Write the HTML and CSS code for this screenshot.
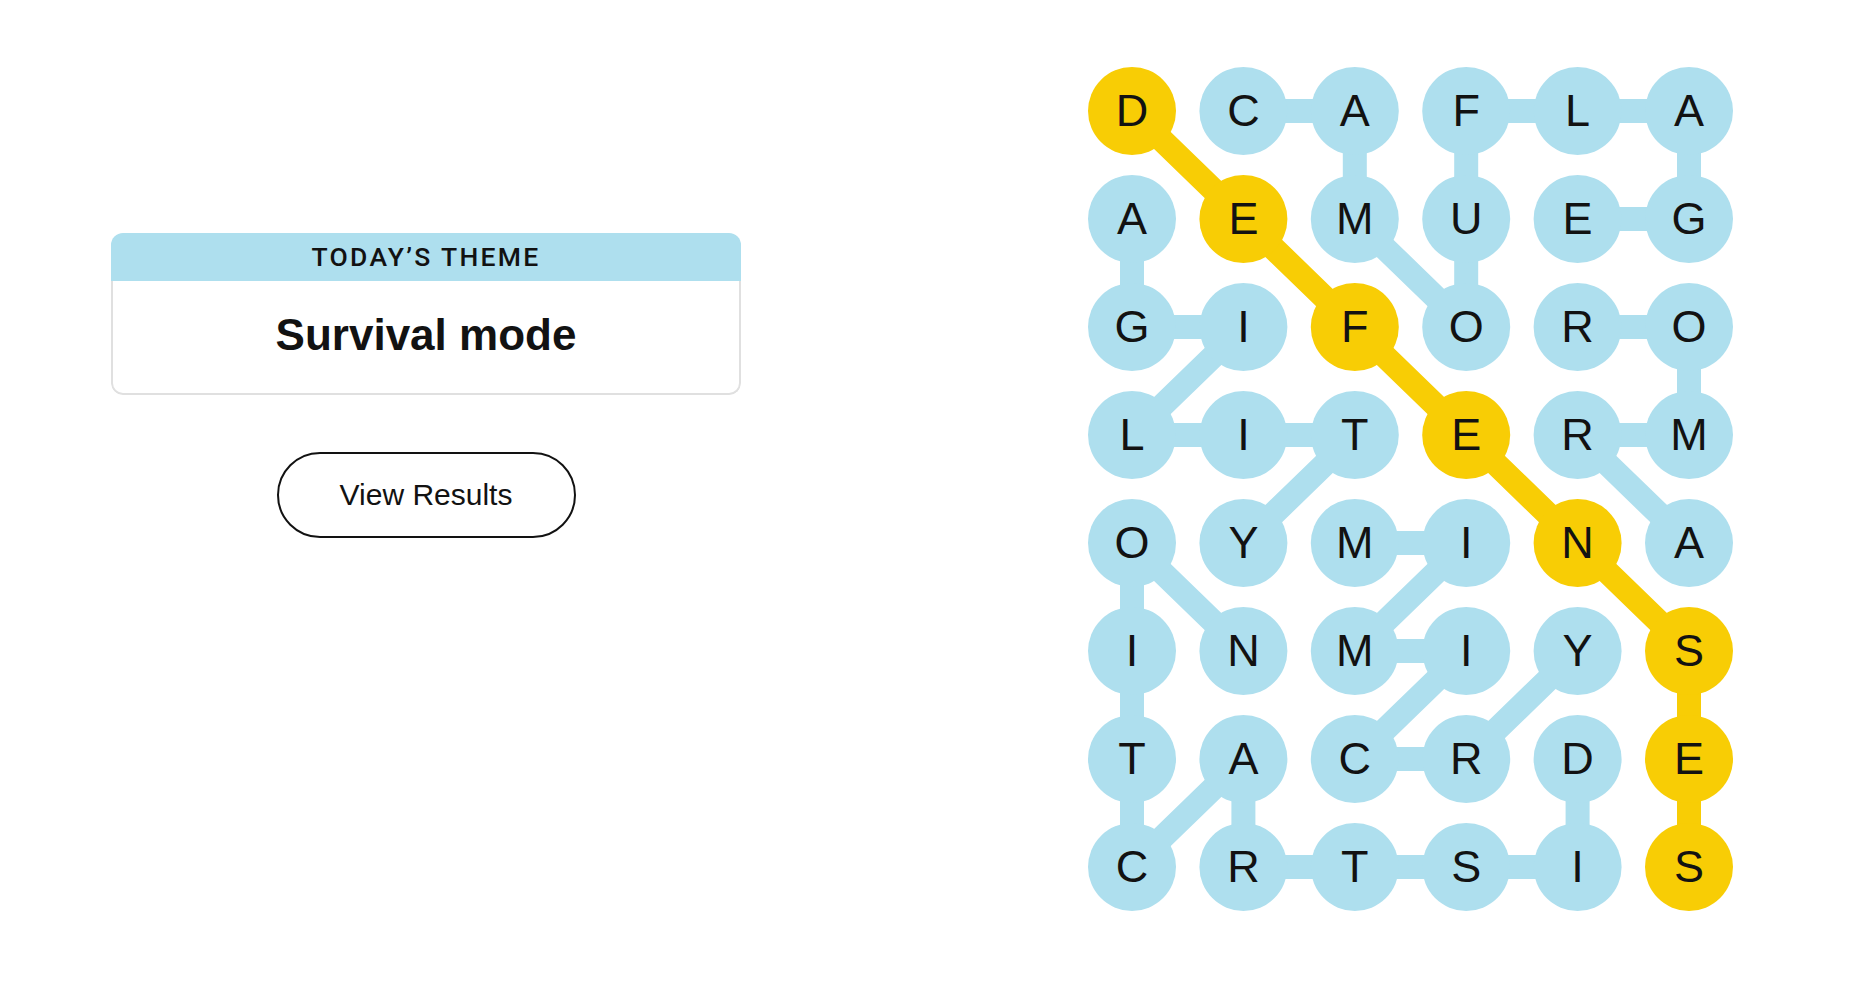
FILE: index.html
```html
<!DOCTYPE html>
<html lang="en">
<head>
<meta charset="utf-8">
<title>Strands</title>
<link rel="stylesheet" href="styles.css">
</head>
<body>
<main class="page">
  <section class="side">
    <div class="theme-card">
      <div class="theme-head">TODAY’S THEME</div>
      <div class="theme-body">Survival mode</div>
    </div>
    <button class="results-btn" type="button">View Results</button>
  </section>
  <section class="board">
    <svg class="board-svg" width="645" height="844" viewBox="0 0 645 844" xmlns="http://www.w3.org/2000/svg">
      <g class="links-blue" fill="none" stroke="#aedfee" stroke-width="24" stroke-linejoin="round" stroke-linecap="round">
        <polyline points="155.4,44 266.8,44 266.8,152 378.2,260 378.2,152 378.2,44 489.6,44 601,44 601,152 489.6,152"/>
        <polyline points="601,476 489.6,368 601,368 601,260 489.6,260"/>
        <polyline points="44,152 44,260 155.4,260 44,368 155.4,368 266.8,368 155.4,476"/>
        <polyline points="266.8,476 378.2,476 266.8,584 378.2,584 266.8,692 378.2,692 489.6,584"/>
        <polyline points="489.6,692 489.6,800 378.2,800 266.8,800 155.4,800 155.4,692 44,800 44,692 44,584 44,476 155.4,584"/>
      </g>
      <g class="links-yellow" fill="none" stroke="#f8cd05" stroke-width="24" stroke-linejoin="round" stroke-linecap="round">
        <polyline points="44,44 155.4,152 266.8,260 378.2,368 489.6,476 601,584 601,692 601,800"/>
      </g>
      <g class="dots">
        <circle cx="44" cy="44" r="44" fill="#f8cd05"/>
        <circle cx="155.4" cy="44" r="44" fill="#aedfee"/>
        <circle cx="266.8" cy="44" r="44" fill="#aedfee"/>
        <circle cx="378.2" cy="44" r="44" fill="#aedfee"/>
        <circle cx="489.6" cy="44" r="44" fill="#aedfee"/>
        <circle cx="601" cy="44" r="44" fill="#aedfee"/>

        <circle cx="44" cy="152" r="44" fill="#aedfee"/>
        <circle cx="155.4" cy="152" r="44" fill="#f8cd05"/>
        <circle cx="266.8" cy="152" r="44" fill="#aedfee"/>
        <circle cx="378.2" cy="152" r="44" fill="#aedfee"/>
        <circle cx="489.6" cy="152" r="44" fill="#aedfee"/>
        <circle cx="601" cy="152" r="44" fill="#aedfee"/>

        <circle cx="44" cy="260" r="44" fill="#aedfee"/>
        <circle cx="155.4" cy="260" r="44" fill="#aedfee"/>
        <circle cx="266.8" cy="260" r="44" fill="#f8cd05"/>
        <circle cx="378.2" cy="260" r="44" fill="#aedfee"/>
        <circle cx="489.6" cy="260" r="44" fill="#aedfee"/>
        <circle cx="601" cy="260" r="44" fill="#aedfee"/>

        <circle cx="44" cy="368" r="44" fill="#aedfee"/>
        <circle cx="155.4" cy="368" r="44" fill="#aedfee"/>
        <circle cx="266.8" cy="368" r="44" fill="#aedfee"/>
        <circle cx="378.2" cy="368" r="44" fill="#f8cd05"/>
        <circle cx="489.6" cy="368" r="44" fill="#aedfee"/>
        <circle cx="601" cy="368" r="44" fill="#aedfee"/>

        <circle cx="44" cy="476" r="44" fill="#aedfee"/>
        <circle cx="155.4" cy="476" r="44" fill="#aedfee"/>
        <circle cx="266.8" cy="476" r="44" fill="#aedfee"/>
        <circle cx="378.2" cy="476" r="44" fill="#aedfee"/>
        <circle cx="489.6" cy="476" r="44" fill="#f8cd05"/>
        <circle cx="601" cy="476" r="44" fill="#aedfee"/>

        <circle cx="44" cy="584" r="44" fill="#aedfee"/>
        <circle cx="155.4" cy="584" r="44" fill="#aedfee"/>
        <circle cx="266.8" cy="584" r="44" fill="#aedfee"/>
        <circle cx="378.2" cy="584" r="44" fill="#aedfee"/>
        <circle cx="489.6" cy="584" r="44" fill="#aedfee"/>
        <circle cx="601" cy="584" r="44" fill="#f8cd05"/>

        <circle cx="44" cy="692" r="44" fill="#aedfee"/>
        <circle cx="155.4" cy="692" r="44" fill="#aedfee"/>
        <circle cx="266.8" cy="692" r="44" fill="#aedfee"/>
        <circle cx="378.2" cy="692" r="44" fill="#aedfee"/>
        <circle cx="489.6" cy="692" r="44" fill="#aedfee"/>
        <circle cx="601" cy="692" r="44" fill="#f8cd05"/>

        <circle cx="44" cy="800" r="44" fill="#aedfee"/>
        <circle cx="155.4" cy="800" r="44" fill="#aedfee"/>
        <circle cx="266.8" cy="800" r="44" fill="#aedfee"/>
        <circle cx="378.2" cy="800" r="44" fill="#aedfee"/>
        <circle cx="489.6" cy="800" r="44" fill="#aedfee"/>
        <circle cx="601" cy="800" r="44" fill="#f8cd05"/>
      </g>
      <g class="letters" text-anchor="middle">
        <text x="44" y="59">D</text><text x="155.4" y="59">C</text><text x="266.8" y="59">A</text><text x="378.2" y="59">F</text><text x="489.6" y="59">L</text><text x="601" y="59">A</text>
        <text x="44" y="167">A</text><text x="155.4" y="167">E</text><text x="266.8" y="167">M</text><text x="378.2" y="167">U</text><text x="489.6" y="167">E</text><text x="601" y="167">G</text>
        <text x="44" y="275">G</text><text x="155.4" y="275">I</text><text x="266.8" y="275">F</text><text x="378.2" y="275">O</text><text x="489.6" y="275">R</text><text x="601" y="275">O</text>
        <text x="44" y="383">L</text><text x="155.4" y="383">I</text><text x="266.8" y="383">T</text><text x="378.2" y="383">E</text><text x="489.6" y="383">R</text><text x="601" y="383">M</text>
        <text x="44" y="491">O</text><text x="155.4" y="491">Y</text><text x="266.8" y="491">M</text><text x="378.2" y="491">I</text><text x="489.6" y="491">N</text><text x="601" y="491">A</text>
        <text x="44" y="599">I</text><text x="155.4" y="599">N</text><text x="266.8" y="599">M</text><text x="378.2" y="599">I</text><text x="489.6" y="599">Y</text><text x="601" y="599">S</text>
        <text x="44" y="707">T</text><text x="155.4" y="707">A</text><text x="266.8" y="707">C</text><text x="378.2" y="707">R</text><text x="489.6" y="707">D</text><text x="601" y="707">E</text>
        <text x="44" y="815">C</text><text x="155.4" y="815">R</text><text x="266.8" y="815">T</text><text x="378.2" y="815">S</text><text x="489.6" y="815">I</text><text x="601" y="815">S</text>
      </g>
    </svg>
  </section>
</main>
</body>
</html>
```

FILE: styles.css
```css
html, body {
  margin: 0;
  padding: 0;
  background: #ffffff;
}

body {
  font-family: "Liberation Sans", Arial, sans-serif;
  color: #121212;
}

.page {
  display: flex;
  align-items: flex-start;
  width: 1862px;
  height: 1000px;
  box-sizing: border-box;
}

.side {
  width: 630px;
  margin-left: 111px;
  padding-top: 233px;
  display: flex;
  flex-direction: column;
  align-items: center;
}

.theme-card {
  width: 630px;
  border-radius: 12px;
  overflow: hidden;
  box-sizing: border-box;
}

.theme-head {
  height: 48px;
  background: #aedfee;
  display: flex;
  align-items: center;
  justify-content: center;
  font-family: Roboto, "Liberation Sans", sans-serif;
  font-weight: 500;
  font-size: 26.5px;
  letter-spacing: 2.3px;
  line-height: 1;
  padding-top: 1px;
  box-sizing: border-box;
  color: #121212;
}

.theme-body {
  border: 2px solid #e0e0e0;
  border-top: none;
  border-radius: 0 0 12px 12px;
  display: flex;
  align-items: center;
  justify-content: center;
  padding-bottom: 5px;
  box-sizing: content-box;
  height: 107px;
  font-weight: 700;
  font-size: 44px;
  line-height: 1;
  color: #121212;
}

.results-btn {
  margin-top: 57px;
  width: 299px;
  height: 86px;
  border: 2px solid #121212;
  border-radius: 43px;
  background: #ffffff;
  font-family: "Liberation Sans", Arial, sans-serif;
  font-size: 30px;
  color: #121212;
  line-height: 1;
  padding: 0;
}

.board {
  margin-left: 347px;
  padding-top: 67px;
}

.board-svg {
  display: block;
}

.letters text {
  font-family: "Liberation Sans", Arial, sans-serif;
  font-size: 45px;
  fill: #121212;
}
```
